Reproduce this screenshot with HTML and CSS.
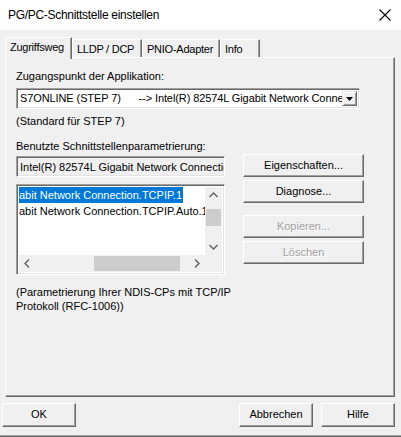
FILE: index.html
```html
<!DOCTYPE html>
<html>
<head>
<meta charset="utf-8">
<link rel="stylesheet" href="styles.css">
</head>
<body>
<div class="dialog">
  <div class="titlebar">
    <span class="title">PG/PC-Schnittstelle einstellen</span>
    <svg class="close" width="12" height="12" viewBox="0 0 12 12"><path d="M0.5 0.5 L11.5 11.5 M11.5 0.5 L0.5 11.5" stroke="#000" stroke-width="1.1" fill="none"/></svg>
  </div>
  <div class="body">
    <div class="tabs">
      <div class="tab active t1">Zugriffsweg</div>
      <div class="tab t2">LLDP / DCP</div>
      <div class="tab t3">PNIO-Adapter</div>
      <div class="tab t4">Info</div>
    </div>
    <div class="panel">
      <div class="label">Zugangspunkt der Applikation:</div>
      <div class="combo">
        <div class="combo-text">S7ONLINE (STEP 7)      --&gt; Intel(R) 82574L Gigabit Network Connection.TCPIP.1</div>
        <div class="combo-btn"><svg width="7" height="4" viewBox="0 0 7 4"><path d="M0 0 H7 L3.5 4 Z" fill="#000"/></svg></div>
      </div>
      <div class="label note1">(Standard für STEP 7)</div>
      <div class="label label2">Benutzte Schnittstellenparametrierung:</div>
      <div class="main">
        <div class="leftcol">
          <div class="readonly">Intel(R) 82574L Gigabit Network Connection.TCPIP.1</div>
          <div class="listbox">
            <div class="list-area">
              <div class="list-items">
                <div class="item"><span class="sel">abit Network Connection.TCPIP.1</span></div>
                <div class="item">abit Network Connection.TCPIP.Auto.1</div>
              </div>
              <div class="vscroll">
                <svg class="arr" width="17" height="17" viewBox="0 0 17 17"><path d="M4.5 10 L8.5 6 L12.5 10" stroke="#606060" stroke-width="1.4" fill="none"/></svg>
                <div class="vtrack"><div class="vthumb"></div></div>
                <svg class="arr" width="17" height="17" viewBox="0 0 17 17"><path d="M4.5 7 L8.5 11 L12.5 7" stroke="#606060" stroke-width="1.4" fill="none"/></svg>
              </div>
            </div>
            <div class="hscroll">
              <svg class="arr" width="17" height="17" viewBox="0 0 17 17"><path d="M10 4.5 L6 8.5 L10 12.5" stroke="#606060" stroke-width="1.4" fill="none"/></svg>
              <div class="htrack"><div class="hthumb"></div></div>
              <svg class="arr" width="17" height="17" viewBox="0 0 17 17"><path d="M7 4.5 L11 8.5 L7 12.5" stroke="#606060" stroke-width="1.4" fill="none"/></svg>
              <div class="corner"></div>
            </div>
          </div>
        </div>
        <div class="rightcol">
          <div class="btn">Eigenschaften...</div>
          <div class="btn">Diagnose...</div>
          <div class="btn disabled gap">Kopieren...</div>
          <div class="btn disabled">Löschen</div>
        </div>
      </div>
      <div class="label note2">(Parametrierung Ihrer NDIS-CPs mit TCP/IP<br>Protokoll (RFC-1006))</div>
    </div>
    <div class="footer">
      <div class="btn fbtn">OK</div>
      <div class="spacer"></div>
      <div class="btn fbtn">Abbrechen</div>
      <div class="btn fbtn">Hilfe</div>
    </div>
  </div>
  <div class="bottomline"></div>
</div>
</body>
</html>
```

FILE: styles.css
```css
* { box-sizing: border-box; }
html, body { margin: 0; padding: 0; }
body {
  width: 401px;
  height: 437px;
  background: #f0f0f0;
  font-family: "Liberation Sans", Arial, sans-serif;
  font-size: 11px;
  color: #000;
  overflow: hidden;
}
.dialog { width: 401px; height: 437px; display: flex; flex-direction: column; }
.titlebar {
  height: 30px;
  flex: none;
  background: #fff;
  display: flex;
  align-items: center;
  padding: 0 10px 0 8px;
}
.title { font-size: 12px; letter-spacing: -0.3px; flex: 1; }
.close { display: block; }
.body { flex: 1; display: flex; flex-direction: column; padding: 7px 6px 0 5px; }
.tabs { display: flex; height: 20px; align-items: flex-end; position: relative; z-index: 2; }
.tab {
  height: 18px;
  padding: 2px 0 0 4px;
  background: #f0f0f0;
  border-top: 1px solid #fff;
  border-left: 1px solid #fff;
  border-right: 1px solid #696969;
  box-shadow: inset -1px 0 0 #a0a0a0;
  line-height: 14px;
  white-space: nowrap;
  overflow: hidden;
  letter-spacing: -0.25px;
}
.tab.active {
  height: 22px;
  padding-top: 2px;
  margin-bottom: -2px;
}
.t1 { width: 67px; }
.t2 { width: 70px; }
.t3 { width: 78px; }
.t4 { width: 40px; }
.panel {
  height: 340px;
  flex: none;
  border-top: 1px solid #fff;
  border-left: 1px solid #fff;
  border-right: 1px solid #696969;
  border-bottom: 1px solid #696969;
  box-shadow: inset -1px -1px 0 #a0a0a0;
  padding: 12px 0 0 10px;
  display: flex;
  flex-direction: column;
}
.label { line-height: 13px; }
.combo {
  margin-top: 5px;
  width: 344px;
  height: 21px;
  background: #fff;
  border-top: 1px solid #a0a0a0;
  border-left: 1px solid #a0a0a0;
  border-right: 1px solid #fff;
  border-bottom: 1px solid #fff;
  box-shadow: inset 1px 1px 0 #696969, inset -1px -1px 0 #e3e3e3;
  display: flex;
  padding: 2px;
}
.combo-text {
  flex: 1;
  white-space: pre;
  overflow: hidden;
  line-height: 15px;
  padding-left: 1px;
  letter-spacing: -0.1px;
}
.combo-btn {
  width: 15px;
  height: 15px;
  background: #f0f0f0;
  border-top: 1px solid #e3e3e3;
  border-left: 1px solid #e3e3e3;
  border-right: 1px solid #696969;
  border-bottom: 1px solid #696969;
  box-shadow: inset 1px 1px 0 #fff, inset -1px -1px 0 #a0a0a0;
  display: flex;
  align-items: center;
  justify-content: center;
}
.combo-btn svg { display: block; margin-top: 1px; }
.note1 { margin-top: 6px; }
.label2 { margin-top: 12px; }
.main { display: flex; margin-top: 3px; }
.leftcol { width: 209px; display: flex; flex-direction: column; }
.readonly {
  height: 21px;
  background: #f0f0f0;
  border-top: 1px solid #a0a0a0;
  border-left: 1px solid #a0a0a0;
  border-right: 1px solid #fff;
  border-bottom: 1px solid #fff;
  box-shadow: inset 1px 1px 0 #696969, inset -1px -1px 0 #e3e3e3;
  white-space: nowrap;
  overflow: hidden;
  padding: 3px 0 0 3px;
  line-height: 14px;
}
.listbox {
  margin-top: 7px;
  height: 91px;
  background: #fff;
  border-top: 1px solid #a0a0a0;
  border-left: 1px solid #a0a0a0;
  border-right: 1px solid #fff;
  border-bottom: 1px solid #fff;
  box-shadow: inset 1px 1px 0 #696969, inset -1px -1px 0 #e3e3e3;
  padding: 2px;
  display: flex;
  flex-direction: column;
}
.list-area { flex: 1; display: flex; min-height: 0; }
.list-items { flex: 1; overflow: hidden; white-space: nowrap; }
.item { height: 16px; line-height: 16px; }
.sel { background: #0078d7; color: #fff; display: inline-block; padding-right: 1px; }
.vscroll { width: 17px; background: #f0f0f0; display: flex; flex-direction: column; }
.arr { display: block; flex: none; }
.vtrack { flex: 1; position: relative; }
.vthumb { position: absolute; left: 1px; right: 1px; top: 5px; height: 17px; background: #cdcdcd; }
.hscroll { height: 17px; background: #f0f0f0; display: flex; }
.htrack { flex: 1; position: relative; }
.hthumb { position: absolute; top: 1px; bottom: 1px; left: 58px; width: 86px; background: #cdcdcd; }
.corner { width: 17px; background: #f0f0f0; }
.rightcol { margin-left: 18px; margin-top: -2px; display: flex; flex-direction: column; gap: 3px; }
.btn {
  width: 121px;
  height: 23px;
  background: #f0f0f0;
  border-top: 1px solid #fff;
  border-left: 1px solid #fff;
  border-right: 1px solid #696969;
  border-bottom: 1px solid #696969;
  box-shadow: inset -1px -1px 0 #a0a0a0;
  display: flex;
  align-items: center;
  justify-content: center;
  line-height: 13px;
  padding-bottom: 1px;
  white-space: nowrap;
}
.btn.disabled { color: #a0a0a0; text-shadow: 1px 1px 0 #fff; }
.btn.gap { margin-top: 9px; }
.note2 { margin-top: 10px; line-height: 14px; }
.footer { display: flex; margin-top: 6px; margin-left: -3px; gap: 8px; }
.spacer { flex: 1; }
.fbtn { width: 74px; height: 24px; }
.bottomline { height: 2px; margin-top: 6px; border-top: 1px solid #a0a0a0; border-bottom: 1px solid #696969; flex: none; }
```
